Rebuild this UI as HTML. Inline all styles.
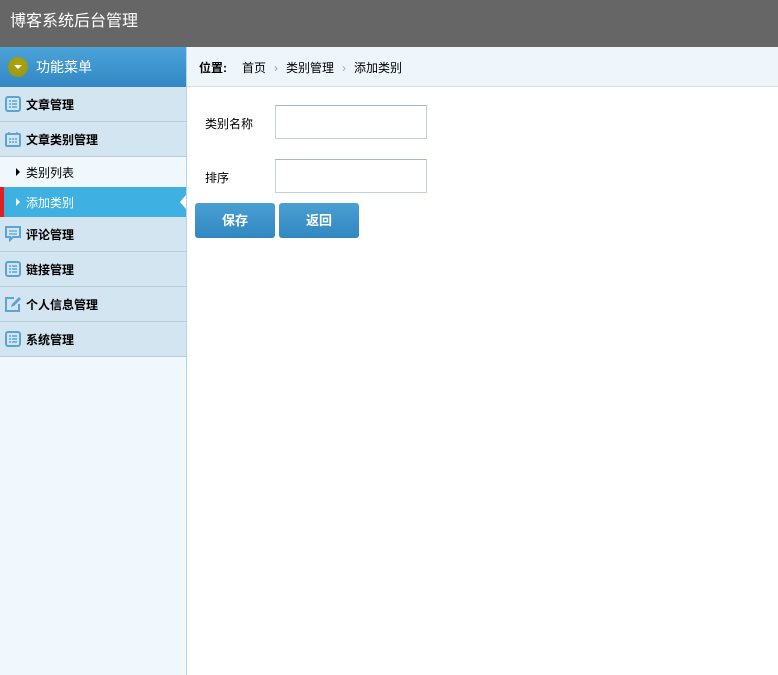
<!DOCTYPE html>
<html><head><meta charset="utf-8"><style>
*{margin:0;padding:0;box-sizing:border-box}
body{width:778px;height:675px;overflow:hidden;font-family:"Liberation Sans","Noto Sans CJK SC",sans-serif;font-size:12px;color:#000;background:#fff;position:relative}
.hd{position:absolute;left:0;top:0;width:778px;height:47px;background:#666;color:#fff;font-size:16px;padding:7px 0 0 10px}
.sb{position:absolute;left:0;top:47px;width:187px;height:628px;background:#f0f8fd;border-right:1px solid #b5d5e6}
.mh{height:40px;background:linear-gradient(#4aa3d8,#3287c4);color:#fff;font-size:14px;padding:10px 0 0 36px;position:relative}
.mh i{position:absolute;left:8px;top:10px;width:20px;height:20px;border-radius:50%;background:radial-gradient(circle at 50% 40%,#b8a010,#8a9a10);}
.mh i:after{content:"";position:absolute;left:6px;top:8px;border-left:4px solid transparent;border-right:4px solid transparent;border-top:4px solid #fff}
.it{height:35px;background:#d3e5f0;border-bottom:1px solid #b6cedc;font-weight:bold;padding:9px 0 0 26px;position:relative}
.it svg{position:absolute;left:5px;top:9px}
.sub{height:30px;padding:7px 0 0 26px;position:relative}
.sub:before{content:"";position:absolute;left:16px;top:11px;border-top:4px solid transparent;border-bottom:4px solid transparent;border-left:4px solid #000}
.sub.on{background:#3eb0e2;color:#fff;border-left:4px solid #e02020;padding-left:22px}
.sub.on:before{left:12px;border-left-color:#fff}
.sub.on:after{content:"";position:absolute;right:0;top:8px;border-top:7px solid transparent;border-bottom:7px solid transparent;border-right:6px solid #fff}
.bc{position:absolute;left:187px;top:47px;width:591px;height:40px;background:#eef5fb;border-bottom:1px solid #d4e1ea;padding:12px 0 0 12px}
.bc b{margin-right:15px}
.bc s{text-decoration:none;color:#aaa;margin:0 8px}
.lb{position:absolute;left:205px}
.in{position:absolute;left:275px;width:152px;height:34px;border:1px solid #c5d0d8;border-top-color:#a9b6c0}
.bt{position:absolute;top:203px;width:80px;height:35px;border-radius:3px;background:linear-gradient(#4aa0d2,#3187c0);color:#fff;font-weight:bold;font-size:13px;text-align:center;line-height:35px}
</style></head><body>
<div class="hd">博客系统后台管理</div>
<div class="sb">
<div class="mh"><i></i>功能菜单</div>
<div class="it"><svg width="16" height="16"><rect x="1" y="1" width="14" height="14" rx="2" fill="none" stroke="#5aa5d5" stroke-width="2"/><path d="M4 5h2M7 5h5M4 8h2M7 8h5M4 11h2M7 11h5" stroke="#5aa5d5" stroke-width="1.5"/></svg>文章管理</div>
<div class="it"><svg width="16" height="16"><rect x="1" y="3" width="14" height="12" rx="1" fill="none" stroke="#5aa5d5" stroke-width="2"/><path d="M4 1v3M12 1v3M4 8h2M7 8h2M10 8h2M4 11h2M7 11h2M10 11h2" stroke="#5aa5d5" stroke-width="1.5"/></svg>文章类别管理</div>
<div class="sub">类别列表</div>
<div class="sub on">添加类别</div>
<div class="it"><svg width="16" height="16"><path d="M1 1h14v10H8l-3 3v-3H1z" fill="none" stroke="#5aa5d5" stroke-width="2"/><path d="M4 5h8M4 8h8" stroke="#5aa5d5" stroke-width="1.3"/></svg>评论管理</div>
<div class="it"><svg width="16" height="16"><rect x="1" y="1" width="14" height="14" rx="2" fill="none" stroke="#5aa5d5" stroke-width="2"/><path d="M4 5h2M7 5h5M4 8h2M7 8h5M4 11h2M7 11h5" stroke="#5aa5d5" stroke-width="1.5"/></svg>链接管理</div>
<div class="it"><svg width="16" height="16"><path d="M9 2H1v13h13V8" fill="none" stroke="#5aa5d5" stroke-width="2"/><path d="M6 11l1-3 7-7 2 2-7 7z" fill="#5aa5d5"/></svg>个人信息管理</div>
<div class="it"><svg width="16" height="16"><rect x="1" y="1" width="14" height="14" rx="2" fill="none" stroke="#5aa5d5" stroke-width="2"/><path d="M4 5h2M7 5h5M4 8h2M7 8h5M4 11h2M7 11h5" stroke="#5aa5d5" stroke-width="1.5"/></svg>系统管理</div>
</div>
<div class="bc"><b>位置:</b>首页<s>›</s>类别管理<s>›</s>添加类别</div>
<div class="lb" style="top:115px">类别名称</div>
<div class="in" style="top:105px"></div>
<div class="lb" style="top:169px">排序</div>
<div class="in" style="top:159px"></div>
<div class="bt" style="left:195px">保存</div>
<div class="bt" style="left:279px">返回</div>
</body></html>
